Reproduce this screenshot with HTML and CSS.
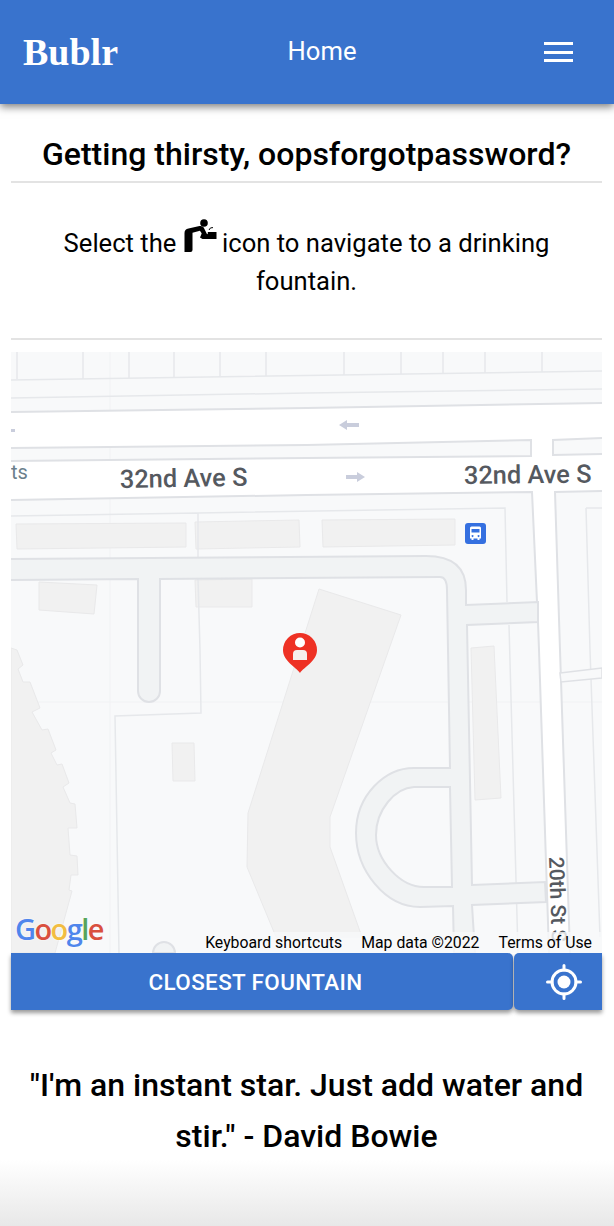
FILE: index.html
```html
<!DOCTYPE html>
<html lang="en">
<head>
    <meta charset="UTF-8">
    <meta name="viewport" content="width=device-width, initial-scale=1.0">
    <title>Bublr</title>
    <link rel="stylesheet" href="styles.css">
</head>
<body>
    <header class="navbar">
        <div class="brand">Bublr</div>
        <div class="nav-link">Home</div>
        <div class="burger"><span></span><span></span><span></span></div>
    </header>

    <main class="container">
        <h1>Getting thirsty, oopsforgotpassword?</h1>
        <p class="intro">
            Select the
            <svg class="fountain-icon" viewBox="183 220 33 33" width="33" height="33">
                <circle cx="203" cy="224" r="3.8"/>
                <path d="M183.5 253V234q0-4 4-4.6l11-2.4q3-.5 4.2 1.6l3.6 7.2-3 2.2-4.4-6.2-7.4 2V251q0 2-2 2h-4q-2 0-2-0z"/>
                <path d="M199 238.5l2.2-5.2 2.6 3.7 3-2.3 0-1.7h8.7v7h-14z"/>
                <path d="M208 231q1-3 4-2.4" fill="none" stroke="#000" stroke-width="1"/>
            </svg>
            icon to navigate to a drinking fountain.
        </p>

        <div class="map">
            <svg class="map-canvas" viewBox="11 352 591 601" width="591" height="601">
                <rect x="11" y="352" width="591" height="601" fill="#f8f9fa"/>

                <!-- tile seams -->
                <path d="M110 352V953M11 702H602" stroke="#f1f2f4" fill="none"/>

                <!-- buildings -->
                <g fill="#f1f1f1" stroke="#e9e9ea">
                    <path d="M16 524L186 523 186 547 17 549z"/>
                    <path d="M195 522L299 520 300 547 196 549z"/>
                    <path d="M322 520L455 519 455 545 323 547z"/>
                    <path d="M39 582L97 585 94 614 39 610z"/>
                    <path d="M195 580L252 579 252 607 196 607z"/>
                    <path d="M172 743L194 743 195 781 173 781z"/>
                    <path d="M319 589L401 615 330 817 330 847 362 937 276 937 247 867 248 813z"/>
                    <path d="M11 648L17 650 23 665 18 669 23 682 30 682 40 708 32 712 42 730 48 729 56 750 51 753 57 765 62 764 69 783 63 787 70 803 75 804 77 828 68 828 70 855 77 856 78 875 71 875 69 890 72 891 55 953 11 953z"/>
                </g>

                <!-- white streets -->
                <g fill="#fff">
                    <path d="M11 412L307 408 602 403V438L553 440V455L602 454V491L555 492 560 650 570 953H549L539 650 532 492 307 495 11 500V461L307 458 531 456V440L307 445 11 448z"/>
                </g>

                <!-- property and street edges -->
                <g fill="none" stroke="#e6e8eb" stroke-width="1.5">
                    <path d="M17 352V379M83 352V379M129 352V378M174 352V377M220 352V377M266 352V376M344 352V375M401 352V374M443 352V374M485 352V373M542 352V372"/>
                    <path d="M11 380L602 371M11 398L307 393 602 389"/>
                    <path d="M11 516L198 513 505 508 507 602M198 513V558M198 579L200 650 201 713 115 716 119 953"/>
                    <path d="M509 625L518 953M586 508H602M586 508L590 650 600 937"/>
                </g>

                <g fill="none" stroke="#dfe1e5" stroke-width="2">
                    <path d="M11 412L307 408 602 403M11 448L307 445 531 440V456L307 458 11 461M11 500L307 495 532 492 537 602"/>
                    <path d="M602 438L553 440V455L602 454M602 491L555 492 560 650 570 953M538 622L539 650 549 953"/>
                </g>

                <!-- access roads -->
                <path class="lane" d="M9 559L426 556Q466 556 466 590V605L538 602V622L467 625 472 885 545 882 546 902 472 905 475 953H454L453 906 420 907C385 907 356 870 356 833 356 795 385 768 414 768H450L447 590Q447 577 440 577L160 579V691A11 11 0 0 1 138 691V579L9 580z"/>
                <path class="lane-hole" d="M450 787H414C395 788 376 810 376 835 376 860 400 887 424 887H452z"/>
                <path class="lane" d="M153 953A11 11 0 0 1 175 953z"/>
                <path d="M471 648L494 646 501 798 475 800z" fill="#f1f1f1" stroke="#e9e9ea"/>

                <path d="M560 673L602 668V678L561 682z" fill="#f8f9fa" stroke="#dfe1e5" stroke-width="1.5"/>

                <!-- one way arrows -->
                <g fill="#c9cddc">
                    <path d="M339 425L347 420V423H359V427H347V430z"/>
                    <path d="M365 477L357 472V475H346V479H357V482z"/>
                    <rect x="11" y="429" width="4" height="3"/>
                </g>

                <!-- street names -->
                <g class="street">
                    <text x="120" y="488" transform="rotate(-1 120 488)">32nd Ave S</text>
                    <text x="464" y="484" transform="rotate(-0.6 464 484)">32nd Ave S</text>
                    <text class="street-small" x="11" y="479">ts</text>
                    <text class="street-side" x="549" y="857" transform="rotate(88 549 857)">20th St S</text>
                </g>

                <!-- bus stop -->
                <rect x="465" y="523" width="21" height="21" rx="3" fill="#3570e0"/>
                <path d="M470 528q0-1.500 1.500-1.500h8q1.500 0 1.500 1.500v10.500h-1.500v1.500h-2v-1.500h-4v1.500h-2v-1.500H470zM471.500 529v3.500h8V529zM472.500 535a1 1 0 1 0 .1 0zM478.500 535a1 1 0 1 0 .1 0z" fill="#fff" fill-rule="evenodd"/>

                <!-- user pin -->
                <path d="M300 673C296 667 283 661 283 650A17 17 0 0 1 317 650C317 661 304 667 300 673z" fill="#ee3124"/>
                <circle cx="300" cy="642.500" r="5" fill="#fff"/>
                <path d="M293 660V654Q293 650 297 650H303Q307 650 307 654V660z" fill="#f6efec"/>
            </svg>
            <div class="google-logo"><span class="g-blue">G</span><span class="g-red">o</span><span class="g-yellow">o</span><span class="g-blue">g</span><span class="g-green">l</span><span class="g-red">e</span></div>
            <div class="attribution">
                <span>Keyboard shortcuts</span>
                <span>Map data ©2022</span>
                <span>Terms of Use</span>
            </div>
        </div>

        <div class="actions">
            <button class="btn btn-closest">CLOSEST FOUNTAIN</button>
            <button class="btn btn-locate">
                <svg viewBox="0 0 36 36" width="36" height="36">
                    <circle cx="18" cy="18" r="12" fill="none" stroke="#fff" stroke-width="3"/>
                    <circle cx="18" cy="18" r="6.500" fill="#fff"/>
                    <path d="M18 1.500V6M18 30V34.500M1.500 18H6M30 18H34.500" stroke="#fff" stroke-width="3" stroke-linecap="round"/>
                </svg>
            </button>
        </div>

        <p class="quote">"I'm an instant star. Just add water and stir." - David Bowie</p>
    </main>
    <div class="page-fade"></div>
</body>
</html>
```

FILE: styles.css
```css
html, body {
    margin: 0;
    padding: 0;
}
body {
    font-family: Roboto, "Liberation Sans", sans-serif;
    color: #000;
    background: #fff;
    height: 1226px;
    overflow: hidden;
    position: relative;
}
.navbar {
    display: flex;
    justify-content: space-between;
    align-items: center;
    height: 104px;
    padding: 0 41px 0 23px;
    background: #3973cd;
    box-shadow: 0 3px 8px rgba(0, 0, 0, 0.5);
    color: #fff;
}
.brand {
    font-family: "Liberation Serif", serif;
    font-weight: bold;
    font-size: 38px;
}
.nav-link {
    font-size: 25.6px;
    padding-bottom: 2px;
}
.burger {
    display: flex;
    flex-direction: column;
    gap: 5.5px;
    width: 29px;
    padding-left: 18px;
}
.burger span {
    display: block;
    height: 3px;
    background: #fff;
}
.container {
    padding: 0 12px 0 11px;
}
h1 {
    margin: 0;
    padding: 33px 0 9px;
    font-size: 32px;
    line-height: 35px;
    font-weight: 500;
    text-align: center;
    border-bottom: 2px solid #e3e3e3;
}
.intro {
    margin: 0;
    padding: 36px 40px 38px;
    font-size: 25.6px;
    line-height: 38px;
    text-align: center;
    border-bottom: 2px solid #e3e3e3;
}
.fountain-icon {
    vertical-align: baseline;
    margin: 0 -1px 0 1px;
}
.map {
    position: relative;
    height: 601px;
    margin-top: 12px;
    overflow: hidden;
}
.map-canvas {
    display: block;
}
.lane {
    fill: #f1f3f4;
    stroke: #dfe1e5;
    stroke-width: 2;
}
.lane-hole {
    fill: #f8f9fa;
    stroke: #dfe1e5;
    stroke-width: 2;
}
.street text {
    font-family: Roboto, sans-serif;
    font-size: 25.4px;
    font-weight: 500;
    fill: #55595f;
}
.street .street-small {
    font-size: 20px;
    font-weight: 400;
    fill: #6b7f8c;
}
.street .street-side {
    font-size: 21px;
}
.google-logo {
    position: absolute;
    left: 4px;
    bottom: 5px;
    font-family: "Open Sans", sans-serif;
    font-weight: 600;
    font-size: 29px;
    line-height: 38px;
    letter-spacing: -1.6px;
    text-shadow: 0 0 2px #fff;
}
.g-blue { color: #4f86ec; }
.g-red { color: #d9503f; }
.g-yellow { color: #f2bd42; }
.g-green { color: #57a55a; }
.attribution {
    position: absolute;
    right: 0;
    bottom: 0;
    display: flex;
    gap: 19px;
    height: 21px;
    padding: 0 10px 0 4px;
    background: rgba(248, 249, 250, 0.8);
    font-size: 15.8px;
    line-height: 21px;
}
.actions {
    display: flex;
    gap: 1px;
    height: 57px;
}
.btn {
    border: none;
    border-radius: 5px;
    background: #3973cd;
    color: #fff;
    font-family: inherit;
    cursor: pointer;
    box-shadow: 0 3px 4px rgba(0, 0, 0, 0.4);
    padding: 0;
}
.btn-closest {
    flex: 1;
    border-top-left-radius: 0;
    border-bottom-left-radius: 0;
    padding-right: 13px;
    font-size: 22.4px;
    font-weight: 500;
    letter-spacing: 0.4px;
}
.btn-locate {
    width: 88px;
    display: flex;
    align-items: center;
    justify-content: center;
    border-top-right-radius: 0;
    border-bottom-right-radius: 0;
    padding-left: 12px;
}
.quote {
    margin: 0;
    padding: 50px 0 0;
    font-size: 32px;
    line-height: 51px;
    font-weight: 500;
    text-align: center;
}
.page-fade {
    position: absolute;
    left: 0;
    right: 0;
    bottom: 0;
    height: 66px;
    background: linear-gradient(to bottom, rgba(232, 232, 232, 0), #e8e8e8);
}
```
